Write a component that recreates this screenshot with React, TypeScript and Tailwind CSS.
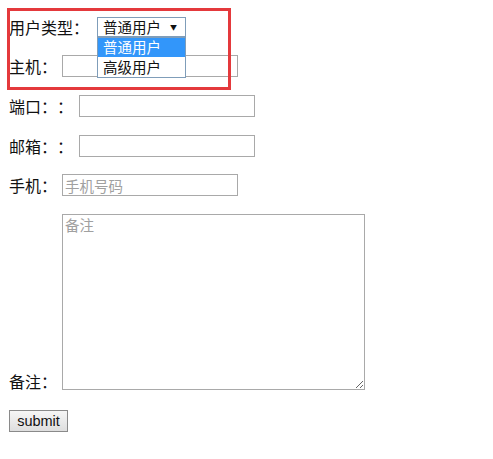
import { FC } from 'react';

const font = "font-['Noto_Sans_CJK_SC','Noto_Sans',sans-serif]";

const inputCls =
    'h-[22px] w-[176px] border border-[#a9a9a9] bg-white px-[2px] text-[14.5px] leading-none outline-none placeholder:text-[#a0a0a0]';

// full-width colon kept at its full 1em, so doubled colons don't get squeezed
const Colon: FC = () => <span className="inline-block w-[16px]">：</span>;

export const App: FC = () => {
    return (
        <div className={`relative h-[459px] w-[493px] bg-white pl-[9px] pt-[17px] text-[16px] text-[#111] ${font}`}>
            {/* user type */}
            <div className="flex h-[20px] items-center">
                <span className="leading-none">用户类型<Colon /></span>
                <div className="relative ml-[8px]">
                    <div className="flex h-[20px] w-[89px] items-center justify-between border border-[#7f9db9] bg-white pl-[5px] pr-[8px] text-[14.5px] leading-none">
                        <span>普通用户</span>
                        <span className="text-[7px]">▼</span>
                    </div>
                    {/* open dropdown */}
                    <div className="absolute left-0 top-[20px] z-10 w-[89px] border border-[#7f9db9] bg-white text-[14.5px] leading-none">
                        <div className="flex h-[19px] items-center bg-[#3296fa] pl-[5px] text-white">普通用户</div>
                        <div className="flex h-[20px] items-center pl-[5px]">高级用户</div>
                    </div>
                </div>
            </div>

            {/* host */}
            <div className="mt-[18px] flex h-[22px] items-center">
                <span className="leading-none">主机<Colon /></span>
                <input className={`ml-[5px] ${inputCls}`} />
            </div>

            {/* port */}
            <div className="mt-[18px] flex h-[22px] items-center">
                <span className="leading-none">端口<Colon /><Colon /></span>
                <input className={`ml-[6px] ${inputCls}`} />
            </div>

            {/* email */}
            <div className="mt-[18px] flex h-[22px] items-center">
                <span className="leading-none">邮箱<Colon /><Colon /></span>
                <input className={`ml-[6px] ${inputCls}`} />
            </div>

            {/* phone */}
            <div className="mt-[17px] flex h-[22px] items-center">
                <span className="leading-none">手机<Colon /></span>
                <input className={`ml-[5px] ${inputCls}`} placeholder="手机号码" />
            </div>

            {/* remark */}
            <div className="mt-[18px] flex items-end">
                <span className="mb-[1px] leading-none">备注<Colon /></span>
                <textarea
                    className="ml-[5px] block h-[176px] w-[303px] border border-[#a9a9a9] bg-white px-[2px] py-[1px] text-[14.5px] leading-[18px] outline-none placeholder:text-[#a0a0a0]"
                    placeholder="备注"
                />
            </div>

            <button className="mt-[20px] flex h-[22px] w-[59px] items-center justify-center border border-[#8a8a8a] bg-gradient-to-b from-[#f6f6f6] to-[#dedede] font-['Liberation_Sans',Arial,sans-serif] text-[14.5px] leading-none text-[#111]">
                submit
            </button>

            {/* annotation box */}
            <div className="pointer-events-none absolute left-[7px] top-[8px] h-[82px] w-[224px] border-[3px] border-[#e4393c]" />
        </div>
    );
};

export default App;
